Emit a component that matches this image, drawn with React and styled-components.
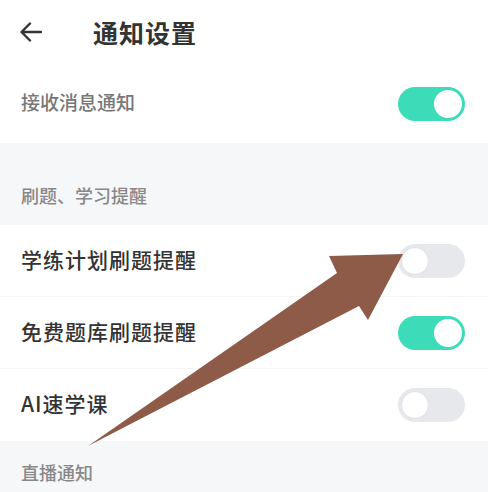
import styled, { createGlobalStyle } from "styled-components";

const Global = createGlobalStyle`
  html, body { margin: 0; padding: 0; background: #fff; }
  body { font-family: "Noto Sans CJK SC", "Noto Sans", sans-serif; }
`;

const Page = styled.div`
  position: relative;
  width: 488px;
  height: 492px;
  overflow: hidden;
  background: #fff;
`;

const Header = styled.div`
  height: 64px;
  display: flex;
  align-items: center;
  padding: 0 20px;
`;

const Back = styled.button`
  border: none;
  background: none;
  padding: 0;
  width: 22px;
  height: 22px;
  display: flex;
  cursor: pointer;
`;

const Title = styled.h1`
  margin: 0 0 0 51px;
  font-size: 25px;
  font-weight: 600;
  color: #333;
  letter-spacing: 1px;
`;

const Row = styled.div`
  height: ${(p) => p.$h || 72}px;
  display: flex;
  align-items: center;
  justify-content: space-between;
  padding: 0 23px 0 21px;
  box-sizing: border-box;
  border-bottom: ${(p) => (p.$line ? "1px solid #f5f5f5" : "none")};
`;

const Label = styled.span`
  margin-top: -4px;
  font-size: ${(p) => (p.$muted ? 19 : 21)}px;
  font-weight: 500;
  color: ${(p) => (p.$muted ? "#777" : "#333")};
  letter-spacing: ${(p) => (p.$muted ? 0 : 1)}px;
`;

const Section = styled.div`
  background: #f6f7f9;
  height: ${(p) => p.$h}px;
  box-sizing: border-box;
  padding: ${(p) => p.$top}px 21px 0;
  font-size: 18px;
  font-weight: 500;
  color: #888;
  line-height: 24px;
`;

const Switch = styled.div`
  width: 67px;
  height: 34px;
  border-radius: 17px;
  box-sizing: border-box;
  background: ${(p) => (p.$on ? "#3ddcb9" : "#e6e8eb")};
  display: flex;
  align-items: center;
  justify-content: ${(p) => (p.$on ? "flex-end" : "flex-start")};
  padding: 0 3px;
`;

const Knob = styled.div`
  width: 28px;
  height: 28px;
  border-radius: 50%;
  background: #fff;
  box-sizing: border-box;
  border: ${(p) => (p.$on ? "none" : "1px solid #e0e2e5")};
`;

const Overlay = styled.svg`
  position: absolute;
  left: 0;
  top: 0;
  pointer-events: none;
`;

function Toggle({ on }) {
  return (
    <Switch $on={on}>
      <Knob $on={on} />
    </Switch>
  );
}

export default function App() {
  return (
    <Page>
      <Global />
      <Header>
        <Back aria-label="返回">
          <svg width="22" height="22" viewBox="0 0 22 22" fill="none" stroke="#333" strokeWidth="2.4" strokeLinecap="round" strokeLinejoin="round">
            <path d="M21 11H2M10 2.5L1.5 11L10 19.5" />
          </svg>
        </Back>
        <Title>通知设置</Title>
      </Header>
      <Row $h={79}>
        <Label $muted>接收消息通知</Label>
        <Toggle on />
      </Row>
      <Section $h={82} $top={40}>刷题、学习提醒</Section>
      <Row $line>
        <Label>学练计划刷题提醒</Label>
        <Toggle />
      </Row>
      <Row $line>
        <Label>免费题库刷题提醒</Label>
        <Toggle on />
      </Row>
      <Row>
        <Label>AI速学课</Label>
        <Toggle />
      </Row>
      <Section $h={60} $top={19}>直播通知</Section>
      <Overlay width="488" height="492" viewBox="0 0 488 492">
        <polygon
          points="403,254 329,256 337,273 88,446 359,306 368,320"
          fill="#8f5b49"
        />
      </Overlay>
    </Page>
  );
}
